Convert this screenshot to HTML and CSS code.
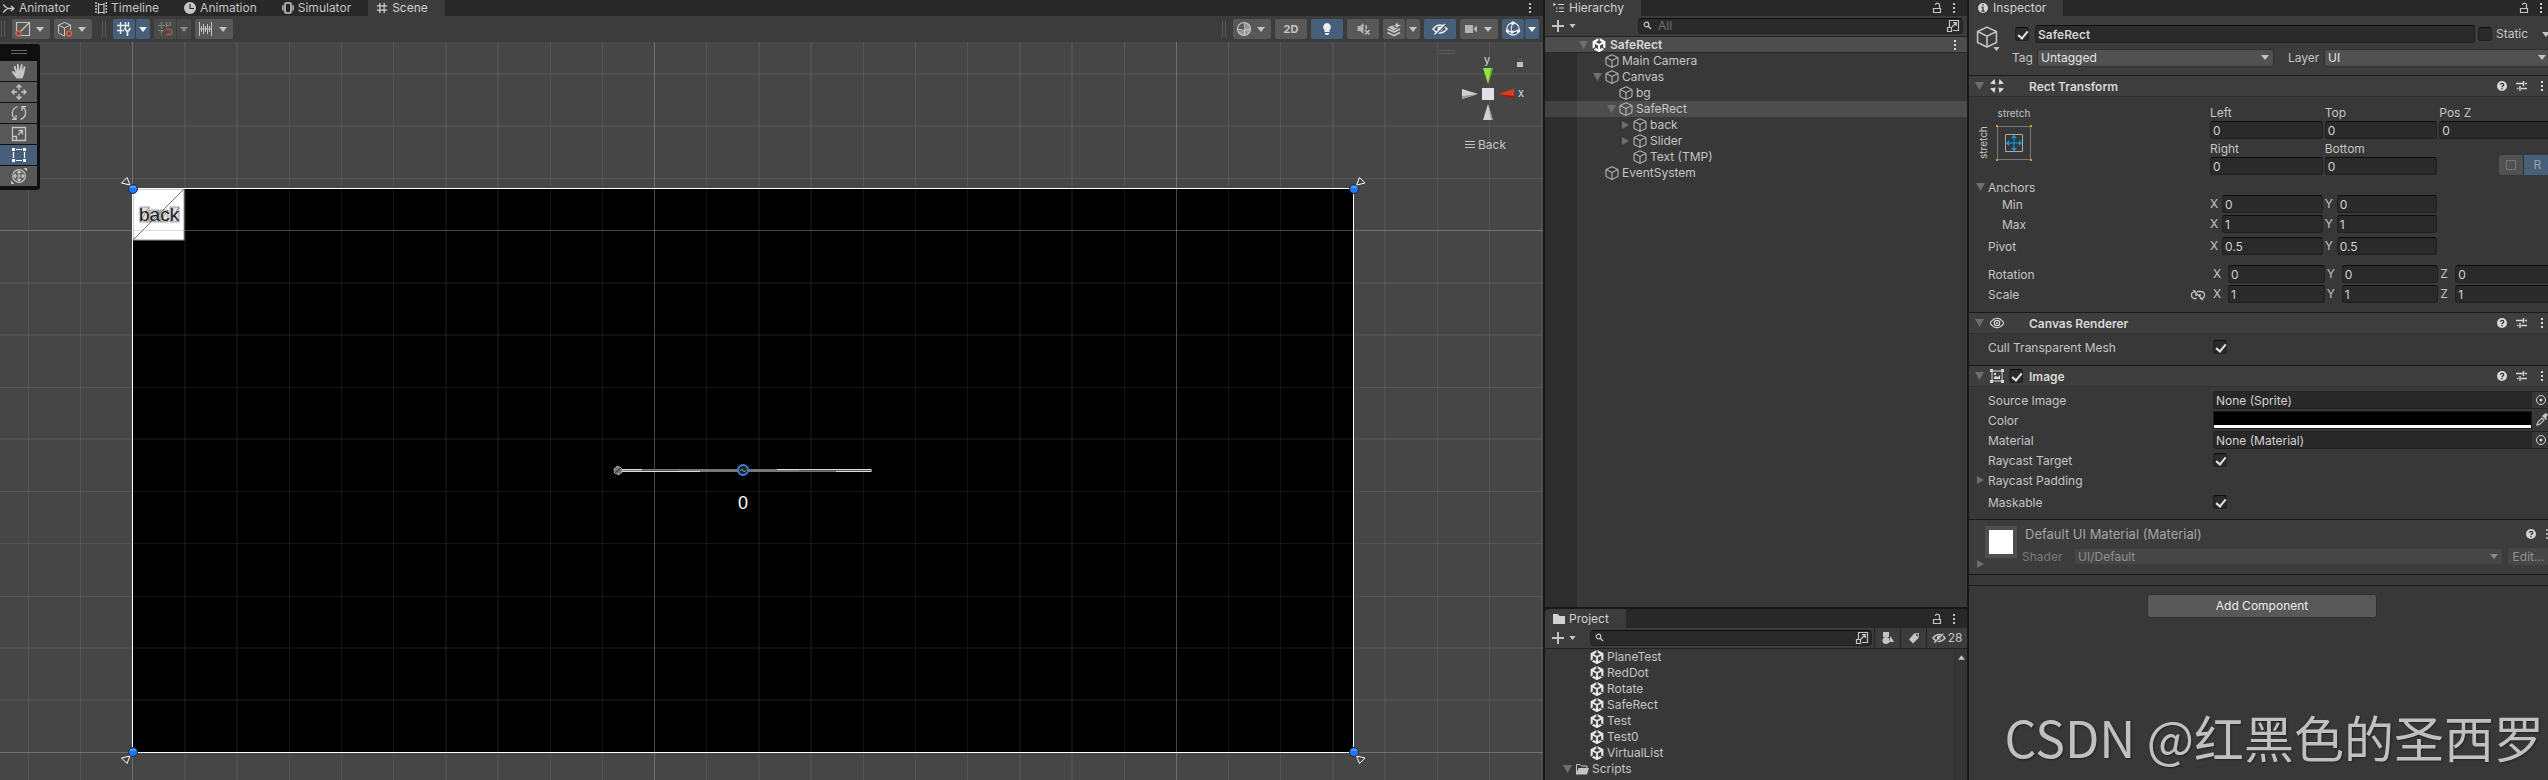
FILE: index.html
```html
<!DOCTYPE html>
<html lang="en">
<head>
  <meta charset="UTF-8">
  <meta name="viewport" content="width=device-width, initial-scale=1.0">
  <title>SafeRect</title>
  <link rel="stylesheet" href="styles.css">
</head>
<body>
  <!-- Icon set -->
  <svg class="icon-set" aria-hidden="true">
    <symbol id="cube" viewBox="0 0 14 14"><path d="M7 .7 13 3.5v7L7 13.4 1 10.5v-7zM1 3.5l6 3 6-3M7 6.5v6.9" fill="none" stroke="currentColor"/></symbol>
    <symbol id="unity" viewBox="0 0 14 14"><path d="M7 1 12.3 4v6L7 13 1.700 10V4z" fill="none" stroke="currentColor" stroke-width="2.200"/><path d="M7 7v6M7 7 2 4.200M7 7l5-2.800" fill="none" stroke="currentColor" stroke-width="2"/><path d="M7 0v3.500M.5 11.500l3-2M13.500 11.500l-3-2" stroke="#383838" stroke-width="1.200"/></symbol>
    <symbol id="kebab" viewBox="0 0 4 12"><path d="M1 1h2v2H1zM1 5h2v2H1zM1 9h2v2H1z" fill="currentColor"/></symbol>
    <symbol id="lock" viewBox="0 0 10 12"><path d="M1.500 6.500h7v4h-7zM7.500 6V3.500a2 2 0 0 0-4-.5" fill="none" stroke="currentColor" stroke-width="1.200"/></symbol>
    <symbol id="down" viewBox="0 0 8 5"><path d="M0 0h8L4 5z" fill="currentColor"/></symbol>
    <symbol id="fold" viewBox="0 0 9 8"><path d="M0 0h9L4.500 8z" fill="currentColor"/></symbol>
    <symbol id="unfold" viewBox="0 0 8 9"><path d="M0 0v9l8-4.500z" fill="currentColor"/></symbol>
    <symbol id="plus" viewBox="0 0 12 12"><path d="M6 0v12M0 6h12" stroke="currentColor" stroke-width="2"/></symbol>
    <symbol id="search" viewBox="0 0 10 10"><circle cx="3.500" cy="3.500" r="2.300" fill="none" stroke="currentColor" stroke-width="1.200"/><path d="m5 5 3 3" stroke="currentColor" stroke-width="1.400"/></symbol>
    <symbol id="popup" viewBox="0 0 14 14"><path d="M3.500 8V1.500h9v10H7M1.500 8.500h4v4h-4zM6 8l4-4M7 3.700h3.300V7" fill="none" stroke="currentColor" stroke-width="1.200"/></symbol>
    <symbol id="help" viewBox="0 0 12 12"><circle cx="6" cy="6" r="5" fill="currentColor"/><path d="M4.500 4.800c0-2 3.200-1.900 3.200 0C7.700 6 6 5.900 6 7.200M6 8v1.300" fill="none" stroke="#333" stroke-width="1.300"/></symbol>
    <symbol id="preset" viewBox="0 0 12 12"><path d="M0 3.500h7M9 3.500h2M7.500 1v5M1 8.500h1.500M5 8.500h6M4 6v5" stroke="currentColor" stroke-width="1.400"/></symbol>
    <symbol id="grid" viewBox="0 0 14 14"><path d="M4.500 1v12M9.500 1v12M1 4.500h12M1 9.500h12" stroke="currentColor" stroke-width="1.400"/></symbol>
    <symbol id="eye-off" viewBox="0 0 16 12"><path d="M1 6q7-8 14 0-7 8-14 0z" fill="none" stroke="currentColor" stroke-width="1.500"/><circle cx="8" cy="6" r="2.500" fill="currentColor"/><path d="M3.500 12 14 1.500" stroke="#3c4a58" stroke-width="1.400"/><path d="M2.500 11.500 13 1" stroke="currentColor" stroke-width="1.500"/></symbol>
    <symbol id="picker" viewBox="0 0 12 12"><circle cx="6" cy="6" r="4.500" fill="none" stroke="currentColor"/><circle cx="6" cy="6" r="1.500" fill="currentColor"/></symbol>
  </svg>

  <main class="editor">
    <!-- Scene view -->
    <section class="panel scene">
      <nav class="tabs">
        <button class="tab tab-first"><svg class="i12" viewBox="0 0 12 12"><path d="M0 2.500 4.500 6.500M0 10.500l4.500-4M4 6.500h6M8 4l3 2.500L8 9" fill="none" stroke="currentColor" stroke-width="1.400"/></svg>Animator</button>
        <button class="tab"><svg class="i12" viewBox="0 0 12 12"><path d="M3.500 1v11M9 1v11M3 2.500h6M3 10.500h6" stroke="currentColor" stroke-width="1.200"/><path d="M1 0v12M11.300 0v12" stroke="currentColor" stroke-width="1.500" stroke-dasharray="2 1"/></svg>Timeline</button>
        <button class="tab"><svg class="i12" viewBox="0 0 12 12"><circle cx="6" cy="6" r="6" fill="currentColor"/><path d="M6 2v4.500h4" fill="none" stroke="#282828" stroke-width="1.200"/></svg>Animation</button>
        <button class="tab"><svg class="i12" viewBox="0 0 12 12"><rect x="3" y="1" width="6" height="10" rx="1" fill="none" stroke="currentColor" stroke-width="1.600"/><path d="M1.500 2.500Q0 3 0 6t1.500 3.500zM10.500 2.500Q12 3 12 6t-1.500 3.500z" fill="currentColor"/></svg>Simulator</button>
        <button class="tab active"><svg class="i12"><use href="#grid"/></svg>Scene</button>
        <button class="icon-btn tabs-menu" aria-label="Scene menu"><svg class="kebab"><use href="#kebab"/></svg></button>
      </nav>
      <div class="toolbar">
        <span class="grip"></span>
        <button class="tool wide" aria-label="Pivot"><svg class="i16" viewBox="0 0 16 16"><path d="M1.500 10V1.500h13v13H6M5 11l9-9" fill="none" stroke="currentColor" stroke-width="1.200"/><circle cx="3.500" cy="12.500" r="2.500" fill="none" stroke="#e0603c" stroke-width="1.400"/></svg><svg class="down"><use href="#down"/></svg></button>
        <button class="tool wide" aria-label="Handle orientation"><svg class="i16" viewBox="0 0 16 16"><path d="M7.500 15 1.500 12V4l6-2.500 6 2.500v5M1.500 4l6 3 6-3M7.500 7v8" fill="none" stroke="currentColor"/><circle cx="12" cy="12.500" r="2.500" fill="none" stroke="#e0603c" stroke-width="1.400"/></svg><svg class="down"><use href="#down"/></svg></button>
        <span class="grip grip-gap"></span>
        <span class="split on">
          <button class="tool" aria-label="Grid axis"><svg class="i16" viewBox="0 0 16 16"><path d="M4.500 1v12M9.500 1v6M1 4.500h12M1 9.500h7M12.500 1v5" fill="none" stroke="currentColor" stroke-width="1.400"/><path d="m8.500 7 3 4 3-4M11.500 11v4" fill="none" stroke="currentColor" stroke-width="1.700"/></svg></button>
          <button class="tool arrow" aria-label="Grid options"><svg class="down"><use href="#down"/></svg></button>
        </span>
        <span class="split off">
          <button class="tool" aria-label="Grid snapping" disabled><svg class="i16" viewBox="0 0 16 16"><path d="M4.500 1v13M9.500 1v5M13 1v4M1 4.500h13M1 9.500h6" stroke="currentColor" stroke-width="1.200" fill="none" stroke-dasharray="3 1"/><path d="M9 8.500h3.500a2.500 2.500 0 0 1 0 5H9" fill="none" stroke="#a05040" stroke-width="2"/></svg></button>
          <button class="tool arrow" aria-label="Snap options" disabled><svg class="down"><use href="#down"/></svg></button>
        </span>
        <button class="tool wide" aria-label="Snap increment"><svg class="i16" viewBox="0 0 16 16"><path d="M1.500 1v14M13.500 1v14M3.500 5v6M5.500 3v10M7.500 5v6M9.500 3v10M11.500 5v6M1 8h13" stroke="currentColor" stroke-width="1"/></svg><svg class="down"><use href="#down"/></svg></button>

        <span class="grip push"></span>
        <button class="tool wide" aria-label="Shading mode"><svg class="i16" viewBox="0 0 16 16"><circle cx="8" cy="8" r="6.500" fill="none" stroke="currentColor" stroke-width="1.200"/><path d="M8.500 1.500q2 5-.5 7-3 2-6.500.5 1 5.500 6.500 5.500t6.500-6.500-6-6.500" fill="currentColor" fill-opacity=".6"/><path d="M8 1.500Q10 9 8 14.500M1.500 8q7 3 13 0" stroke="currentColor" fill="none"/></svg><svg class="down"><use href="#down"/></svg></button>
        <button class="tool flat">2D</button>
        <button class="tool flat on" aria-label="Lighting"><svg class="i16" viewBox="0 0 16 16"><path d="M8 2a4.200 4.200 0 0 1 2.500 7.300V11h-5V9.300A4.200 4.200 0 0 1 8 2zM5.700 12h4.600l-1 2H6.700z" fill="currentColor"/></svg></button>
        <button class="tool flat" aria-label="Audio"><svg class="i16" viewBox="0 0 16 16"><path d="M2.500 5H5l3.500-3v11L5 10H2.500z" fill="currentColor" fill-opacity=".85"/><path d="M10.500 4q1.500 1.500.5 4M10 9l4.500 4.500M14.500 9 10 13.500" stroke="currentColor" stroke-width="1.400" fill="none"/></svg></button>
        <span class="split">
          <button class="tool" aria-label="Effects"><svg class="i16" viewBox="0 0 16 16"><path d="M1.500 8 8 11l6-3M1.500 11.500 8 14.500l6-3" stroke="currentColor" stroke-width="1.800" fill="none"/><path d="M2 6l5-1.500 1 2 3 1-3.500 2zM11 1l1 2.500L15 4.500l-3 1L11 8l-1-2.500L7.500 4.500l2.500-1z" fill="currentColor"/></svg></button>
          <button class="tool arrow" aria-label="Effect options"><svg class="down"><use href="#down"/></svg></button>
        </span>
        <button class="tool flat on" aria-label="Hidden objects"><svg class="i16"><use href="#eye-off"/></svg></button>
        <button class="tool wide" aria-label="Camera"><svg class="i16" viewBox="0 0 16 16"><path d="M2 4h8v8H2zM11 7l3-2.500v7L11 9z" fill="currentColor" fill-opacity=".85"/></svg><svg class="down"><use href="#down"/></svg></button>
        <span class="split on">
          <button class="tool" aria-label="Gizmos"><svg class="i16" viewBox="0 0 16 16"><circle cx="8" cy="8" r="6.200" fill="none" stroke="currentColor" stroke-width="1.200"/><path d="M8 2q-3 5-1 12M2 10q5 2 12-1" fill="none" stroke="currentColor" stroke-width="1.200"/><circle cx="8" cy="2" r="1.800" fill="currentColor"/><circle cx="2.500" cy="10" r="1.800" fill="currentColor"/><circle cx="13.500" cy="10" r="1.800" fill="currentColor"/><circle cx="7.500" cy="11" r="1.500" fill="currentColor"/></svg></button>
          <button class="tool arrow" aria-label="Gizmo options"><svg class="down"><use href="#down"/></svg></button>
        </span>
      </div>

      <div class="viewport">
        <svg class="canvas" aria-label="Scene canvas">
          <rect x="132" y="146" width="1221" height="565" fill="#000"/>
          <!-- game object: back -->
          <rect x="133" y="147" width="51" height="51" fill="#fff" stroke="#999"/>
          <path d="m133 198 51-51" stroke="#777"/>
          <path d="M140 165h9v15h-9zM150 168h9v12h-9zM160 168h8v12h-8zM170 165h9v15h-9zM140 180l9-15M150 180l9-12M160 180l8-12M170 180l9-15" fill="#999" fill-opacity=".3" stroke="#777" stroke-opacity=".7"/>
          <text class="back-text" x="139" y="179">back</text>
          <!-- minor grid -->
          <path class="minor" d="M28.500 0v740M80.500 0v740M289.500 0v740M341.500 0v740M393.500 0v740M550.500 0v740M602.500 0v740M706.500 0v740M863.500 0v740M915.500 0v740M967.500 0v740M1124.500 0v740M1228.500 0v740M1280.500 0v740M1437.500 0v740M1489.500 0v740M1541.500 0v740"/>
          <path class="minor" d="M0 136.500h1543M0 345.500h1543M0 449.500h1543M0 501.500h1543M0 554.500h1543"/>
          <path class="minor double" d="M185 0v740M237 0v740M446 0v740M498 0v740M759 0v740M811 0v740M1020 0v740M1072 0v740M1333 0v740M1385 0v740"/>
          <path class="minor double" d="M0 32h1543M0 84h1543M0 241h1543M0 293h1543M0 397h1543M0 606h1543M0 658h1543"/>
          <path class="major" d="M132.500 0v740M654.500 0v740M1176.500 0v740M0 188.500h1543M0 710.500h1543"/>
          <rect x="132.500" y="146.500" width="1221" height="564" fill="none" stroke="#fff"/>
          <!-- slider -->
          <path d="M617 428.500h255" stroke="#777" stroke-width="3"/>
          <path d="M618 427.500h24M777 427.500h94M622 429.500h78M836 429.500h35" stroke="#ddd"/>
          <path d="M642 428.500h37M799 428.500h72" stroke="#555"/>
          <circle cx="618" cy="428.500" r="4" fill="#777" stroke="#bbb" stroke-dasharray="3 1"/>
          <path d="m615 431 6-5" stroke="#222"/>
          <circle cx="743" cy="428" r="5" fill="#222" stroke="#3b7fe0" stroke-width="2"/>
          <path d="m740 429 2-2 2 3 2-2" stroke="#999" fill="none"/>
          <text class="value-text" x="743" y="467">0</text>
          <!-- corner handles -->
          <g fill="none" stroke="#fff">
            <path d="m130 143-8.500-2 5.500-5.500z"/><path d="m1356.500 143 8.500-2-5.500-5.500z"/><path d="m130 714-8.500 2 5.500 5.500z"/><path d="m1356.500 714 8.500 2-5.500 5.500z"/>
          </g>
          <g fill="#1f78f0" stroke="#222b38">
            <circle cx="133" cy="147" r="4.500"/><circle cx="1354" cy="147" r="4.500"/><circle cx="133" cy="710" r="4.500"/><circle cx="1354" cy="710" r="4.500"/>
          </g>
          <path d="M130 145h6M1351 145h6M130 708h6M1351 708h6" stroke="#7fb6ff"/>
        </svg>

        <div class="tools">
          <span class="tools-grip"></span>
          <button aria-label="View"><svg class="i16" viewBox="0 0 16 16"><path d="M5.500 15.500 1 9.500Q.3 7.500 2 8l2.500 2L2.800 4q0-1.700 1.700-1L6 8V1.500q.8-1.500 1.700 0L8.300 7.500 10 1.500q1.200-1 1.700.5L11 8l2-4.500q1.500-.7 1.500 1L13 11q-.5 3-2 4.500z" fill="currentColor"/></svg></button>
          <button aria-label="Move"><svg class="i16" viewBox="0 0 16 16"><path d="M8 1v5M8 10v5M1 8h5M10 8h5M5.500 3.500 8 1l2.500 2.500M5.500 12.500 8 15l2.500-2.500M3.500 5.500 1 8l2.500 2.500M12.500 5.500 15 8l-2.500 2.500" fill="none" stroke="currentColor" stroke-width="1.400"/></svg></button>
          <button aria-label="Rotate"><svg class="i16" viewBox="0 0 16 16"><path d="M6.500 1.500C0 4 0 11 4.500 14M1 14.300h4V10M9.500 14.500C16 12 16 5 11.500 2M15 1.700h-4V6" fill="none" stroke="currentColor" stroke-width="1.300"/></svg></button>
          <button aria-label="Scale"><svg class="i16" viewBox="0 0 16 16"><path d="M1.500 10V1.500h13v13H6M1.500 10.500h4v4h-4zM7 9l4-4M7.500 4.500h4v4" fill="none" stroke="currentColor" stroke-width="1.300"/></svg></button>
          <button class="on" aria-label="Rect"><svg class="i16" viewBox="0 0 16 16"><path d="M5 2.500h6M5 13.500h6M2.500 5v6M13.500 5v6" stroke="currentColor" stroke-width="1.200"/><path d="M1 1h3v3H1zM12 1h3v3h-3zM1 12h3v3H1zM12 12h3v3h-3z" fill="currentColor"/></svg></button>
          <button aria-label="Transform"><svg class="i16" viewBox="0 0 16 16"><circle cx="8" cy="8" r="6.300" fill="none" stroke="currentColor" stroke-width="1.200"/><path d="M8 3v10M3 8h10M6 5l2-2 2 2M6 11l2 2 2-2M5 6 3 8l2 2M11 6l2 2-2 2" fill="none" stroke="currentColor" stroke-width="1.200"/><path d="M12.500 0H16v3.500zM0 12.500V16h3.500z" fill="currentColor"/></svg></button>
        </div>

        <div class="gizmo">
          <svg class="gizmo-art" viewBox="0 0 100 84" aria-hidden="true">
            <path d="M1 8.500h16M1 11.500h16" stroke="#5c5c5c"/>
            <path d="M45 26h10l-5 16z" fill="#8fe33c"/><path d="M53 26h2l-5 16z" fill="#62a728"/>
            <path d="M24 47v10l16-5z" fill="#d0d0d4"/><path d="M24 54v3l16-5z" fill="#9999a0"/>
            <path d="M76 47v10l-16-5z" fill="#dd3a20"/><path d="M76 54v3l-16-5z" fill="#8e1f10"/>
            <path d="M45 78h10l-5-16z" fill="#d0d0d4"/><path d="M53 78h2l-5-16z" fill="#9999a0"/>
            <path d="M44 46h12v12H44z" fill="#e0e0e4"/>
            <path d="M79 20h6v5h-6z" fill="#c0c0c0"/><path d="M80 18v-1h4v3" fill="none" stroke="#5c5c5c"/>
            <text x="46" y="22">y</text><text x="80" y="55">x</text>
          </svg>
          <button class="back-view"><svg viewBox="0 0 10 8"><path d="M0 .5h10M0 3.500h10M0 6.500h10" stroke="currentColor"/></svg>Back</button>
        </div>
      </div>
    </section>

    <div class="middle">
      <!-- Hierarchy -->
      <section class="panel hierarchy">
        <nav class="tabs">
          <button class="tab active"><svg class="i12" viewBox="0 0 12 12"><path d="M5 2.500h6M6 6h5M6 9.500h5M1 2.500h2M3 6h1.500M3 9.500h1.500M1 1v3" stroke="currentColor" stroke-width="1.200"/></svg>Hierarchy</button>
          <span class="tab-actions">
            <button class="icon-btn" aria-label="Lock"><svg class="lock"><use href="#lock"/></svg></button>
            <button class="icon-btn" aria-label="Hierarchy menu"><svg class="kebab"><use href="#kebab"/></svg></button>
          </span>
        </nav>
        <div class="bar">
          <button class="icon-btn add" aria-label="Create"><svg class="i12"><use href="#plus"/></svg><svg class="down small"><use href="#down"/></svg></button>
          <label class="search wide-gap"><svg class="i10"><use href="#search"/></svg><input type="text" placeholder="All" aria-label="Search hierarchy"><svg class="popup"><use href="#popup"/></svg></label>
        </div>
        <ul class="tree">
          <li class="scene-row d0"><svg class="fold"><use href="#fold"/></svg><svg class="i14"><use href="#unity"/></svg>SafeRect<svg class="kebab row-menu"><use href="#kebab"/></svg></li>
          <li class="d1"><span class="fold"></span><svg class="i14"><use href="#cube"/></svg>Main Camera</li>
          <li class="d1"><svg class="fold"><use href="#fold"/></svg><svg class="i14"><use href="#cube"/></svg>Canvas</li>
          <li class="d2"><span class="fold"></span><svg class="i14"><use href="#cube"/></svg>bg</li>
          <li class="d2 selected"><svg class="fold"><use href="#fold"/></svg><svg class="i14"><use href="#cube"/></svg>SafeRect</li>
          <li class="d3"><svg class="fold"><use href="#unfold"/></svg><svg class="i14"><use href="#cube"/></svg>back</li>
          <li class="d3"><svg class="fold"><use href="#unfold"/></svg><svg class="i14"><use href="#cube"/></svg>Slider</li>
          <li class="d3"><span class="fold"></span><svg class="i14"><use href="#cube"/></svg>Text (TMP)</li>
          <li class="d1"><span class="fold"></span><svg class="i14"><use href="#cube"/></svg>EventSystem</li>
        </ul>
      </section>

      <!-- Project -->
      <section class="panel project">
        <nav class="tabs tall">
          <button class="tab active"><svg class="i12" viewBox="0 0 12 12"><path d="M0 1h5l1.500 2H12v8H0z" fill="currentColor"/></svg>Project</button>
          <span class="tab-actions">
            <button class="icon-btn" aria-label="Lock"><svg class="lock"><use href="#lock"/></svg></button>
            <button class="icon-btn" aria-label="Project menu"><svg class="kebab"><use href="#kebab"/></svg></button>
          </span>
        </nav>
        <div class="bar">
          <button class="icon-btn add" aria-label="Create"><svg class="i12"><use href="#plus"/></svg><svg class="down small"><use href="#down"/></svg></button>
          <label class="search"><svg class="i10"><use href="#search"/></svg><input type="text" aria-label="Search project"><svg class="popup"><use href="#popup"/></svg></label>
          <button class="filter" aria-label="Filter by type"><svg class="i12" viewBox="0 0 12 12"><path d="M1 0h6v5H1zM8.500 4 12 10H7z" fill="currentColor"/><circle cx="4" cy="8.500" r="3.500" fill="currentColor"/></svg></button>
          <button class="filter" aria-label="Filter by label"><svg class="i12" viewBox="0 0 12 12"><path d="M6 1.500 11 1l-.5 5L5 11.500 1 7.500zM9 2a1 1 0 1 0 .1 0z" fill="currentColor" fill-rule="evenodd"/></svg></button>
          <button class="filter count"><svg class="i14"><use href="#eye-off"/></svg>28</button>
        </div>
        <div class="files">
          <ul>
            <li><svg class="i14"><use href="#unity"/></svg>PlaneTest</li>
            <li><svg class="i14"><use href="#unity"/></svg>RedDot</li>
            <li><svg class="i14"><use href="#unity"/></svg>Rotate</li>
            <li><svg class="i14"><use href="#unity"/></svg>SafeRect</li>
            <li><svg class="i14"><use href="#unity"/></svg>Test</li>
            <li><svg class="i14"><use href="#unity"/></svg>Test0</li>
            <li><svg class="i14"><use href="#unity"/></svg>VirtualList</li>
            <li class="folder"><svg class="fold"><use href="#fold"/></svg><svg class="i14" viewBox="0 0 14 14"><path d="M1.500 12V2.500H5L6.500 4H12v2" fill="none" stroke="currentColor"/><path d="M3.500 6H14l-2 6.500H1z" fill="currentColor"/></svg>Scripts</li>
          </ul>
          <div class="scrollbar"><svg viewBox="0 0 8 5"><path d="M0 5h8L4 0z" fill="currentColor"/></svg></div>
        </div>
      </section>
    </div>

    <!-- Inspector -->
    <section class="panel inspector">
      <nav class="tabs">
        <button class="tab active"><svg class="i12" viewBox="0 0 12 12"><circle cx="6" cy="6" r="5" fill="currentColor"/><path d="M6 2.200v1.600M4.500 5.500H6V9M4.500 9h3" stroke="#3c3c3c" stroke-width="1.300" fill="none"/></svg>Inspector</button>
        <span class="tab-actions">
          <button class="icon-btn" aria-label="Lock"><svg class="lock"><use href="#lock"/></svg></button>
          <button class="icon-btn" aria-label="Inspector menu"><svg class="kebab"><use href="#kebab"/></svg></button>
        </span>
      </nav>
      <div class="content">
        <header class="object">
          <button class="icon-btn object-icon" aria-label="Select icon"><svg class="big-cube"><use href="#cube"/></svg><svg class="down small"><use href="#down"/></svg></button>
          <div class="object-rows">
            <div class="object-row name-row">
              <input type="checkbox" checked aria-label="Active">
              <input type="text" class="field name" value="SafeRect" aria-label="Name">
              <input type="checkbox" id="static"><label class="static" for="static">Static</label><svg class="down"><use href="#down"/></svg>
            </div>
            <div class="object-row">
              <label class="tag" for="tag">Tag</label>
              <span class="select"><select id="tag"><option>Untagged</option></select></span>
              <label class="layer" for="layer">Layer</label>
              <span class="select layer-select"><select id="layer"><option>UI</option></select></span>
            </div>
          </div>
        </header>

        <h2 class="component"><svg class="fold"><use href="#fold"/></svg><svg class="i14" viewBox="0 0 14 14"><path d="M0 4.500 4.500 0l1 5.500zM9.500 0 14 4.500 8.500 5.500zM0 9.500 4.500 14l1-5.500zM9.500 14 14 9.500 8.500 8.500z" fill="currentColor"/></svg><span class="title">Rect Transform</span><svg class="i12"><use href="#help"/></svg><svg class="i12 preset"><use href="#preset"/></svg><svg class="kebab"><use href="#kebab"/></svg></h2>
        <div class="rect">
          <div class="rect-top">
            <div class="anchor">
              <span class="stretch-h">stretch</span>
              <span class="stretch-v">stretch</span>
              <button class="anchor-btn" aria-label="Anchor presets"><svg viewBox="0 0 36 36"><path d="M1.500 1.500h33v33h-33z" fill="none" stroke="#777"/><path d="M9.500 9.500h17v17h-17z" fill="none" stroke="#aaa"/><path d="M18 11v14M11 18h14" stroke="#0a9fe0"/><path d="M18 10l-3 3h6zM18 26l-3-3h6zM10 18l3-3v6zM26 18l-3-3v6z" fill="#0a9fe0"/><path d="M0 0h2v2H0zM34 0h2v2h-2zM0 34h2v2H0zM34 34h2v2h-2z" fill="#d49a00"/></svg></button>
            </div>
            <div class="offsets">
              <label>Left<input type="text" class="field" value="0"></label>
              <label>Top<input type="text" class="field" value="0"></label>
              <label>Pos Z<input type="text" class="field" value="0"></label>
              <label>Right<input type="text" class="field" value="0"></label>
              <label>Bottom<input type="text" class="field" value="0"></label>
              <span class="modes">
                <button aria-label="Blueprint mode"><svg class="i12" viewBox="0 0 12 12"><path d="M1.500 1.500h9v9h-9z" fill="none" stroke="currentColor" stroke-dasharray="2 1"/></svg></button><button class="on">R</button>
              </span>
            </div>
          </div>
          <div class="row anchors-row"><svg class="fold row-fold"><use href="#fold"/></svg><span class="label">Anchors</span></div>
          <div class="row"><span class="label indent">Min</span><div class="axes"><label>X<input type="text" class="field" value="0"></label><label>Y<input type="text" class="field" value="0"></label></div></div>
          <div class="row"><span class="label indent">Max</span><div class="axes"><label>X<input type="text" class="field" value="1"></label><label>Y<input type="text" class="field" value="1"></label></div></div>
          <div class="row pivot"><span class="label">Pivot</span><div class="axes"><label>X<input type="text" class="field" value="0.5"></label><label>Y<input type="text" class="field" value="0.5"></label></div></div>
          <div class="row rotation"><span class="label">Rotation</span><div class="axes roomy"><label>X<input type="text" class="field" value="0"></label><label>Y<input type="text" class="field" value="0"></label><label>Z<input type="text" class="field" value="0"></label></div></div>
          <div class="row"><span class="label">Scale<svg class="link" viewBox="0 0 14 12"><path d="M5 2.500H4a3.500 3.500 0 0 0 0 7h1.500M9 9.500h1a3.500 3.500 0 0 0 0-7H6M4 6h2M8 6h2M2 1l10 10" fill="none" stroke="currentColor" stroke-width="1.300"/></svg></span><div class="axes roomy"><label>X<input type="text" class="field" value="1"></label><label>Y<input type="text" class="field" value="1"></label><label>Z<input type="text" class="field" value="1"></label></div></div>
        </div>

        <h2 class="component"><svg class="fold"><use href="#fold"/></svg><svg class="i14" viewBox="0 0 14 14"><path d="M0 7q7-9.500 14 0-7 9.500-14 0z" fill="none" stroke="currentColor" stroke-width="1.200"/><circle cx="7" cy="7" r="2.700" fill="none" stroke="currentColor" stroke-width="1.200"/><circle cx="7" cy="7" r="1" fill="currentColor"/></svg><span class="title">Canvas Renderer</span><svg class="i12"><use href="#help"/></svg><svg class="i12 preset"><use href="#preset"/></svg><svg class="kebab"><use href="#kebab"/></svg></h2>
        <div class="props">
          <div class="row"><label class="label wide" for="cull">Cull Transparent Mesh</label><input type="checkbox" id="cull" checked></div>
        </div>

        <h2 class="component"><svg class="fold"><use href="#fold"/></svg><svg class="i14" viewBox="0 0 14 14"><path d="M2 2h10v10H2z" fill="none" stroke="currentColor"/><path d="M0 0h3v3H0zM11 0h3v3h-3zM0 11h3v3H0zM11 11h3v3h-3zM4 10V8l2-1 2 1 2-2v4zM4 4h2v2H4z" fill="currentColor"/></svg><input type="checkbox" checked aria-label="Image enabled"><span class="title">Image</span><svg class="i12"><use href="#help"/></svg><svg class="i12 preset"><use href="#preset"/></svg><svg class="kebab"><use href="#kebab"/></svg></h2>
        <div class="props">
          <div class="row"><label class="label wide" for="source">Source Image</label><span class="object-field"><input type="text" id="source" value="None (Sprite)" readonly><button aria-label="Pick sprite"><svg class="i12"><use href="#picker"/></svg></button></span></div>
          <div class="row"><label class="label wide" for="color">Color</label><span class="color-field"><button id="color" class="swatch" aria-label="Color"></button><button class="icon-btn" aria-label="Pick color"><svg class="i14" viewBox="0 0 14 14"><path d="m2 12 1-3 4-4 2 2-4 4z" fill="none" stroke="currentColor" stroke-width="1.200"/><path d="m7 3 4 4 1-1-1-1.500q3-3 1-4t-3.500 1.500L8 2z" fill="currentColor"/></svg></button></span></div>
          <div class="row"><label class="label wide" for="material">Material</label><span class="object-field"><input type="text" id="material" value="None (Material)" readonly><button aria-label="Pick material"><svg class="i12"><use href="#picker"/></svg></button></span></div>
          <div class="row"><label class="label wide" for="target">Raycast Target</label><input type="checkbox" id="target" checked></div>
          <div class="row"><svg class="fold row-fold"><use href="#unfold"/></svg><span class="label">Raycast Padding</span></div>
          <div class="row maskable"><label class="label wide" for="maskable">Maskable</label><input type="checkbox" id="maskable" checked></div>
        </div>

        <div class="material">
          <svg class="fold"><use href="#unfold"/></svg>
          <span class="preview"></span>
          <div class="material-rows">
            <div class="material-title"><span>Default UI Material (Material)</span><svg class="i12"><use href="#help"/></svg><svg class="kebab"><use href="#kebab"/></svg></div>
            <div class="shader"><label for="shader">Shader</label><span class="select"><select id="shader" disabled><option>UI/Default</option></select></span><button disabled>Edit...</button></div>
          </div>
        </div>
        <div class="footer"><button class="add-component">Add Component</button></div>
      </div>
      <p class="watermark">CSDN @红黑色的圣西罗</p>
    </section>
  </main>
</body>
</html>
```
FILE: styles.css
```css
/* Reset and global styling */
* {
  margin: 0;
  padding: 0;
  box-sizing: border-box;
}

body {
  height: 100vh;
  overflow: hidden;
  background: #191919;
  color: #c4c4c4;
  font-family: Inter, "Liberation Sans", sans-serif;
  font-size: 12px;
  line-height: 16px;
}

button,
input,
select {
  font: inherit;
  color: inherit;
  border: none;
  background: none;
}

svg {
  display: block;
  flex: none;
}

ul {
  list-style: none;
}

.icon-set {
  position: absolute;
  width: 0;
  height: 0;
}

/* Icon sizes */
.i10 { width: 10px; height: 10px; }
.i12 { width: 12px; height: 12px; }
.i14 { width: 14px; height: 14px; }
.i16 { width: 16px; height: 16px; }
.kebab { width: 4px; height: 12px; }
.lock { width: 10px; height: 12px; }
.down { width: 8px; height: 5px; }
.down.small { width: 7px; height: 4px; }
.popup { width: 14px; height: 14px; }

.fold {
  width: 9px;
  height: 8px;
  flex: none;
  color: #6e6e6e;
}

.icon-btn {
  display: flex;
  align-items: center;
}

/* Editor layout */
.editor {
  display: flex;
  gap: 2px;
  height: 100%;
}

.panel {
  display: flex;
  flex-direction: column;
  background: #383838;
  overflow: hidden;
}

.scene {
  flex: 1;
  min-width: 0;
}

.middle {
  flex: 0 0 422px;
  display: flex;
  flex-direction: column;
  gap: 2px;
}

.hierarchy {
  flex: 1;
}

.project {
  flex: 0 0 171px;
  border-radius: 4px 4px 0 0;
}

.inspector {
  flex: 0 0 579px;
  position: relative;
}

/* Tabs */
.tabs {
  display: flex;
  flex: none;
  height: 16px;
  background: #282828;
}

.tabs.tall {
  height: 19px;
}

.tab {
  display: flex;
  align-items: center;
  gap: 4px;
  padding: 0 17px 0 8px;
}

.tab-first {
  padding-left: 3px;
}

.tab.active {
  background: #3c3c3c;
  color: #d2d2d2;
}

.tabs-menu {
  margin-left: auto;
  padding-right: 11px;
}

.tab-actions {
  display: flex;
  align-items: center;
  gap: 10px;
  margin-left: auto;
  padding-right: 11px;
}

.inspector .tab-actions {
  padding-right: 5px;
}

/* Scene toolbar */
.toolbar {
  display: flex;
  align-items: center;
  gap: 4px;
  flex: none;
  height: 26px;
  padding: 0 4px 0 1px;
  background: #3c3c3c;
}

.grip {
  width: 4px;
  height: 16px;
  margin-right: 3px;
  border: solid #5a5a5a;
  border-width: 0 1px;
}

.grip-gap {
  margin-left: 6px;
}

.push {
  margin-left: auto;
}

.tool {
  display: flex;
  align-items: center;
  justify-content: center;
  width: 22px;
  height: 20px;
  border-radius: 2px;
  background: #585858;
}

.tool.wide {
  justify-content: flex-start;
  width: 38px;
  gap: 5px;
  padding-left: 3px;
}

.tool.flat {
  width: 32px;
  font-size: 11px;
  font-weight: bold;
}

.tool.arrow {
  width: 14px;
}

.split {
  display: flex;
  gap: 1px;
}

.tool.on,
.split.on .tool {
  background: #46607c;
  color: #eee;
}

.split.off .tool {
  background: #4a4a4a;
  color: #858585;
}

/* Viewport */
.viewport {
  position: relative;
  flex: 1;
  background: #464646;
}

.canvas {
  position: absolute;
  width: 100%;
  height: 100%;
}

.minor {
  stroke: #fff;
  stroke-opacity: 0.08;
}

.minor.double {
  stroke-width: 2px;
  stroke-opacity: 0.06;
}

.major {
  stroke: #aaa;
  stroke-opacity: 0.42;
}

.back-text {
  font: 19px "Liberation Sans", Arial, sans-serif;
  fill: #222;
}

.value-text {
  font: 18px "Liberation Sans", Arial, sans-serif;
  fill: #fff;
  text-anchor: middle;
}

.tools {
  position: absolute;
  top: 2px;
  left: 0;
  display: flex;
  flex-direction: column;
  gap: 1px;
  width: 40px;
  padding: 0 3px 4px 0;
  border-radius: 0 3px 3px 0;
  background: #0f0f0f;
}

.tools-grip {
  align-self: center;
  width: 16px;
  height: 4px;
  margin: 6px 0;
  border: solid #666;
  border-width: 1px 0;
}

.tools button {
  display: flex;
  align-items: center;
  justify-content: center;
  height: 20px;
  background: #585858;
}

.tools .on {
  background: #46607c;
  color: #fff;
}

.gizmo {
  position: absolute;
  top: 0;
  right: 5px;
  width: 100px;
}

.gizmo-art {
  width: 100px;
  height: 84px;
}

.gizmo-art text {
  font-size: 11px;
  fill: #ddd;
}

.back-view {
  display: flex;
  align-items: center;
  gap: 3px;
  margin: 11px 0 0 27px;
}

.back-view svg {
  width: 10px;
  height: 8px;
}

/* Search bars */
.bar {
  display: flex;
  align-items: center;
  flex: none;
  height: 21px;
  padding-left: 7px;
  border-bottom: 1px solid #232323;
  background: #3c3c3c;
}

.add {
  gap: 5px;
  margin-right: 14px;
}

.search {
  flex: 1;
  display: flex;
  align-items: center;
  min-width: 0;
  height: 16px;
  margin-right: 2px;
  padding: 0 2px 0 4px;
  border: 1px solid #212121;
  border-top-color: #0d0d0d;
  border-radius: 4px;
  background: #2a2a2a;
}

.search.wide-gap {
  margin: 0 4px 0 48px;
}

.search input {
  flex: 1;
  min-width: 0;
  padding-left: 5px;
}

.search input::placeholder {
  color: #6e6e6e;
}

.filter {
  display: flex;
  align-items: center;
  justify-content: center;
  width: 26px;
  height: 20px;
  border-left: 1px solid #232323;
}

.filter.count {
  width: 41px;
  gap: 2px;
}

/* Hierarchy tree */
.tree {
  flex: 1;
  background: linear-gradient(to right, #2d2d2d 32px, #383838 32px);
}

.tree li,
.files li {
  display: flex;
  align-items: center;
  gap: 3px;
  height: 16px;
}

.tree .scene-row {
  gap: 4px;
  padding-right: 10px;
  border-bottom: 1px solid #2a2a2a;
  background: #4d4d4d;
  font-weight: 600;
  color: #d8d8d8;
}

.scene-row .i14 {
  color: #fff;
}

.row-menu {
  margin-left: auto;
}

.tree .d0 { padding-left: 34px; }
.tree .d1 { padding-left: 48px; }
.tree .d2 { padding-left: 62px; }
.tree .d3 { padding-left: 76px; }

.tree .selected {
  background: linear-gradient(to right, #424242 32px, #4d4d4d 32px);
}

/* Project files */
.files {
  display: flex;
  flex: 1;
}

.files ul {
  flex: 1;
}

.files li {
  padding-left: 45px;
}

.files .i14 {
  color: #e4e4e4;
}

.files .folder {
  padding-left: 18px;
}

.files .folder .i14 {
  color: #c4c4c4;
}

.scrollbar {
  width: 13px;
  padding: 6px 3px;
  border-left: 1px solid #303030;
  background: #353535;
}

.scrollbar svg {
  width: 7px;
  height: 5px;
}

/* Form controls */
.field {
  min-width: 0;
  height: 18px;
  padding: 1px 2px 0;
  border: 1px solid #212121;
  border-top-color: #0d0d0d;
  border-radius: 3px;
  background: #2a2a2a;
  color: #d2d2d2;
}

input[type="checkbox"] {
  appearance: none;
  position: relative;
  flex: none;
  width: 14px;
  height: 14px;
  border: 1px solid #212121;
  border-top-color: #0d0d0d;
  border-radius: 3px;
  background: #2a2a2a;
}

input[type="checkbox"]:checked::after {
  content: "";
  position: absolute;
  top: 3px;
  left: 2px;
  width: 8px;
  height: 4px;
  border: solid #e4e4e4;
  border-width: 0 0 2px 2px;
  transform: rotate(-50deg);
}

.select {
  position: relative;
  display: flex;
}

.select::after {
  content: "";
  position: absolute;
  top: 6px;
  right: 5px;
  border: solid transparent;
  border-width: 5px 4px 0;
  border-top-color: #c4c4c4;
}

.select select {
  appearance: none;
  width: 100%;
  height: 18px;
  padding: 0 3px;
  border: 1px solid #303030;
  border-radius: 3px;
  background: #515151;
  color: #e4e4e4;
}

/* Inspector: runs a little past the window edge */
.content {
  width: calc(100% + 7px);
}

.object {
  display: flex;
  gap: 12px;
  padding: 9px 0 8px 7px;
  background: #3c3c3c;
}

.object-icon {
  align-items: flex-start;
  width: 24px;
  padding-top: 1px;
  position: relative;
}

.object-icon .down {
  position: absolute;
  right: 0;
  top: 22px;
}

.big-cube {
  width: 22px;
  height: 22px;
}

.object-rows {
  flex: 1;
  display: flex;
  flex-direction: column;
  gap: 6px;
}

.object-row {
  display: flex;
  align-items: center;
  height: 18px;
}

.name-row {
  padding-left: 3px;
}

.name {
  flex: 1;
  margin: 0 3px 0 6px;
  font-weight: 600;
}

.static {
  width: 41px;
  margin: 0 5px 0 4px;
}

.object-row .down {
  margin-right: 5px;
}

.tag {
  width: 25px;
}

.layer {
  width: 36px;
  margin-left: 14px;
}

.object-row .select {
  flex: 1;
}

.object-row .layer-select {
  flex: 0 0 227px;
  margin-right: 4px;
}

.component {
  display: flex;
  align-items: center;
  height: 22px;
  padding: 0 11px 0 6px;
  border-top: 1px solid #1a1a1a;
  border-bottom: 1px solid #303030;
  background: #3e3e3e;
  font-size: 12px;
  font-weight: 600;
  color: #d8d8d8;
}

.component > .i14 {
  margin-left: 6px;
}

.component input {
  margin-left: 5px;
}

.component .title {
  flex: 1;
  margin-left: 25px;
  padding-top: 1px;
}

.component input + .title {
  margin-left: 6px;
}

.component .i12 {
  margin-right: 8px;
}

.component .preset {
  margin-right: 12px;
}

/* Rect Transform */
.rect {
  padding: 8px 3px 9px 0;
}

.rect-top {
  display: flex;
  margin-bottom: 4px;
}

.anchor {
  flex: 0 0 241px;
  display: grid;
  grid-template-columns: 18px 36px;
  grid-template-rows: 16px 36px;
  gap: 4px 3px;
  padding-left: 6px;
  font-size: 10px;
}

.stretch-h {
  grid-column: 2;
  text-align: center;
}

.stretch-v {
  writing-mode: vertical-rl;
  transform: rotate(180deg);
  text-align: center;
}

.anchor-btn svg {
  width: 36px;
  height: 36px;
}

.offsets,
.axes {
  flex: 1;
  display: grid;
  grid-template-columns: repeat(3, minmax(0, 1fr));
  gap: 2px;
}

.offsets label {
  display: flex;
  flex-direction: column;
}

.modes {
  display: flex;
  justify-content: flex-end;
  align-self: end;
}

.modes button {
  display: flex;
  align-items: center;
  justify-content: center;
  width: 25px;
  height: 20px;
  border-right: 1px solid #303030;
  border-radius: 3px 0 0 3px;
  background: #515151;
  color: #888;
}

.modes .on {
  width: 28px;
  border-radius: 0;
  background: #46607c;
  color: #a0a0a0;
}

.row {
  position: relative;
  display: flex;
  align-items: center;
  height: 18px;
  padding-left: 19px;
}

.row + .row {
  margin-top: 2px;
}

.anchors-row {
  height: 16px;
}

.anchors-row + .row {
  margin-top: 0;
}

.row + .pivot,
.row + .maskable {
  margin-top: 4px;
}

.row + .rotation {
  margin-top: 10px;
}

.label {
  flex: 0 0 222px;
  display: flex;
  align-items: center;
  padding-top: 2px;
}

.label.indent {
  padding-left: 14px;
}

.label.wide {
  flex-basis: 225px;
}

.row-fold {
  position: absolute;
  left: 7px;
}

.axes label {
  display: flex;
  align-items: center;
  justify-content: space-between;
}

.axes .field {
  width: calc(100% - 12px);
}

.axes.roomy {
  padding-left: 3px;
}

.axes.roomy .field {
  width: calc(100% - 15px);
}

.link {
  width: 14px;
  height: 12px;
  margin-left: auto;
  margin-right: 5px;
}

/* Component properties */
.props {
  padding: 4px 3px 8px 0;
}

.props .row:only-child {
  margin-bottom: 1px;
}

.object-field,
.color-field {
  flex: 1;
  display: flex;
  height: 18px;
}

.object-field {
  border: 1px solid #212121;
  border-radius: 3px;
  background: #282828;
  color: #d2d2d2;
}

.object-field input {
  flex: 1;
  padding: 1px 0 0 2px;
}

.object-field button {
  padding: 0 4px 0 3px;
  background: #373737;
}

.swatch {
  flex: 1;
  border: 1px solid #191919;
  background: linear-gradient(#000 13px, #fff 13px);
}

.color-field .icon-btn {
  width: 20px;
  padding-left: 3px;
}

/* Material */
.material {
  display: flex;
  height: 56px;
  padding: 6px 0 0 7px;
  border: solid #1a1a1a;
  border-width: 1px 0;
  background: #3c3c3c;
  color: #999;
}

.material .fold {
  align-self: flex-end;
  margin-bottom: 6px;
}

.preview {
  width: 32px;
  height: 32px;
  border: 4px solid #4f4f4f;
  background: #fff;
}

.material-rows {
  flex: 1;
  padding-left: 5px;
}

.material-title {
  display: flex;
  align-items: center;
  height: 16px;
  padding: 0 6px 0 3px;
  font-size: 13px;
  color: #a4a4a4;
}

.material-title span {
  flex: 1;
}

.material-title .i12 {
  margin-right: 8px;
  color: #d2d2d2;
}

.shader {
  display: flex;
  align-items: center;
  gap: 5px;
  margin-top: 6px;
  color: #7a7a7a;
}

.shader label {
  width: 47px;
}

.shader .select {
  flex: 1;
}

.shader .select::after {
  border-top-color: #888;
}

.shader select,
.shader button {
  height: 17px;
  border-color: #3c3c3c;
  border-radius: 3px;
  background: #464646;
  color: #909090;
  opacity: 1;
}

.shader button {
  width: 47px;
  padding-right: 6px;
}

.footer {
  display: flex;
  justify-content: center;
  margin-top: 10px;
  padding-top: 8px;
  border-top: 1px solid #1a1a1a;
}

.add-component {
  width: 230px;
  height: 24px;
  border: 1px solid #303030;
  border-radius: 3px;
  background: #585858;
  color: #eee;
}

.watermark {
  position: absolute;
  right: 4px;
  bottom: 8px;
  font: 400 50px/72px "Noto Sans CJK SC", sans-serif;
  color: #c0c0c0;
  text-shadow: 1px 1px 2px #222;
  white-space: nowrap;
}
```
